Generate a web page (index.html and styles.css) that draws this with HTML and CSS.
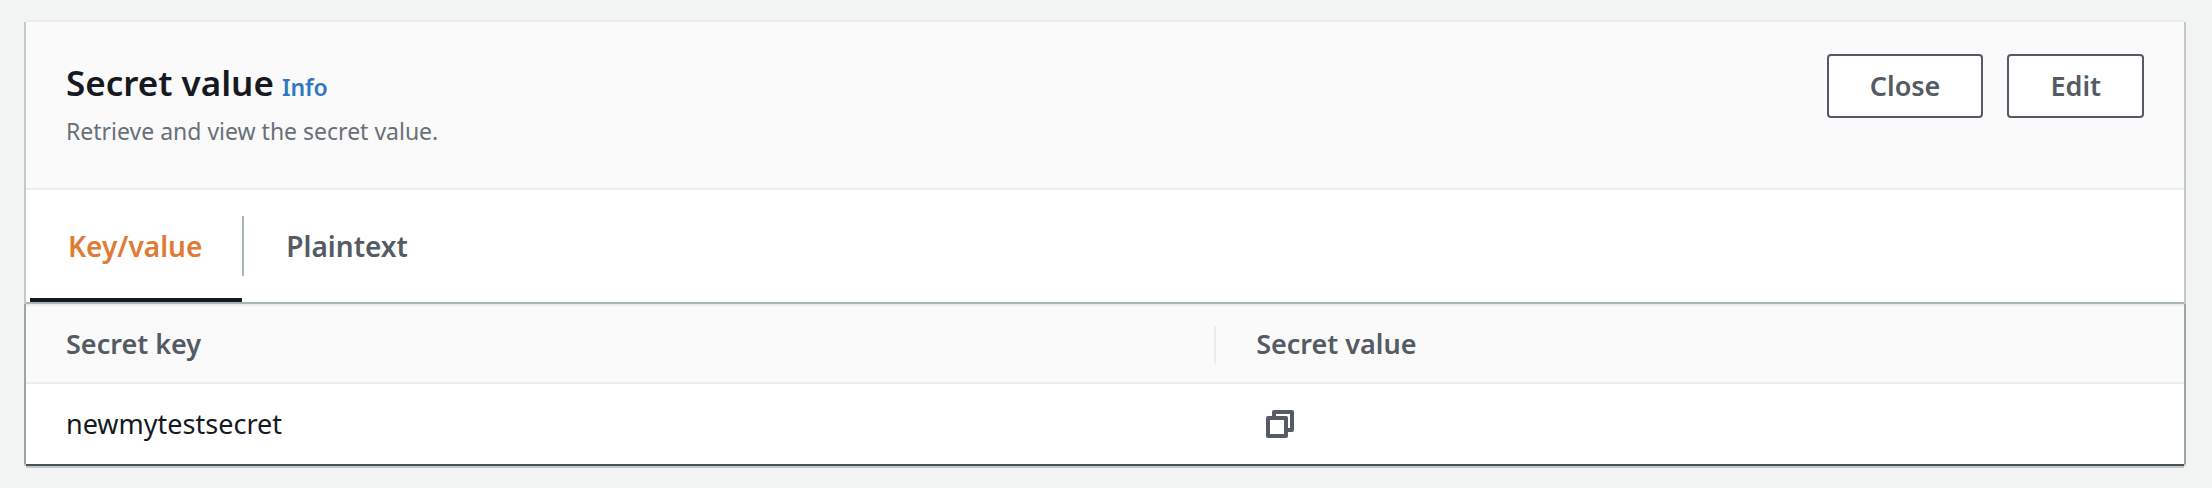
FILE: index.html
```html
<!DOCTYPE html>
<html lang="en">
<head>
<meta charset="utf-8">
<meta name="viewport" content="width=device-width, initial-scale=1">
<title>Secret value</title>
<link rel="stylesheet" href="styles.css">
</head>
<body>
<main class="page">
  <section class="panel" aria-labelledby="panel-title">
    <header class="panel-header">
      <div class="panel-heading">
        <div class="title-row">
          <h2 class="title" id="panel-title">Secret value</h2>
          <a class="info" href="#info">Info</a>
        </div>
        <p class="description">Retrieve and view the secret value.</p>
      </div>
      <div class="actions">
        <button class="button" type="button">Close</button>
        <button class="button" type="button">Edit</button>
      </div>
    </header>
    <div class="tabs" role="tablist">
      <button class="tab tab-active" type="button" role="tab" id="tab-kv" aria-selected="true" aria-controls="kv">Key/value</button>
      <span class="tab-divider"></span>
      <button class="tab" type="button" role="tab" aria-selected="false">Plaintext</button>
    </div>
    <div class="table-wrap" role="tabpanel" id="kv" aria-labelledby="tab-kv">
      <table class="table">
        <thead>
          <tr>
            <th class="col-key" scope="col"><div class="head-label head-divided">Secret key</div></th>
            <th scope="col"><div class="head-label">Secret value</div></th>
          </tr>
        </thead>
        <tbody>
          <tr>
            <td>newmytestsecret</td>
            <td>
              <button class="copy" type="button" aria-label="Copy secret value">
                <svg class="copy-icon" viewBox="0 0 28 28" aria-hidden="true">
                  <path d="M8 6V2h18v18h-4" />
                  <path d="M2 8h18v18H2z" />
                </svg>
              </button>
            </td>
          </tr>
        </tbody>
      </table>
    </div>
  </section>
</main>
</body>
</html>
```
FILE: styles.css
```css
* {
  box-sizing: border-box;
}

body {
  margin: 0;
  background: #f2f3f3;
  color: #16191f;
  font-family: "Noto Sans", "Open Sans", sans-serif;
  font-size: 27px;
  line-height: 40px;
}

button {
  font: inherit;
  cursor: pointer;
}

.page {
  padding: 20px 28px 20px 26px;
}

.panel {
  background: #fff;
  border-top: 2px solid #eaeded;
  box-shadow: -2px 2px 0 #c4c8c8, 2px 2px 0 #c4c8c8;
}

.panel-header {
  display: flex;
  justify-content: space-between;
  align-items: flex-start;
  padding: 32px 40px 38px;
  background: #fafafa;
  border-bottom: 2px solid #eaeded;
}

.title-row {
  display: flex;
  align-items: baseline;
  gap: 8px;
}

.title {
  margin: 0;
  font-size: 35px;
  font-weight: 600;
  line-height: 58px;
}

.info {
  color: #2f78c0;
  font-size: 23px;
  font-weight: 600;
  text-decoration: none;
}

.description {
  margin: 0;
  color: #687078;
  font-size: 23px;
  line-height: 38px;
}

.actions {
  display: flex;
  gap: 24px;
}

.button {
  height: 64px;
  padding: 0 41px;
  border: 2px solid #545b64;
  border-radius: 4px;
  background: #fff;
  color: #545b64;
  font-weight: 600;
}

.tabs {
  display: flex;
  align-items: center;
  height: 114px;
  padding-left: 4px;
  border-bottom: 2px solid #aab7b8;
}

.tab {
  align-self: stretch;
  padding: 4px 40px 0 38px;
  border: 0;
  border-bottom: 4px solid transparent;
  background: none;
  color: #545b64;
  font-size: 28px;
  font-weight: 600;
}

.tab-active {
  border-bottom-color: #16191f;
  color: #e07b36;
}

.tab-divider {
  width: 2px;
  height: 60px;
  margin-right: 4px;
  background: #aab7b8;
}

.table-wrap {
  border-top: 2px solid #eaeded;
  box-shadow: -2px 0 0 #9da4a6, 2px 0 0 #9da4a6, 0 2px 0 #44545a, 0 4px 0 #c4c8c8;
}

.table {
  width: 100%;
  border-collapse: separate;
  border-spacing: 0;
  table-layout: fixed;
}

.table th {
  padding: 20px 0 18px;
  background: #fafafa;
  border-bottom: 2px solid #eaeded;
  color: #545b64;
  font-weight: 600;
  text-align: left;
}

.col-key {
  width: 55.15%;
}

.head-label {
  padding: 0 40px 2px;
  line-height: 36px;
}

.head-divided {
  border-right: 2px solid #eaeded;
}

.table td {
  height: 80px;
  padding: 0 40px;
}

.copy {
  display: block;
  padding: 10px;
  border: 0;
  background: none;
}

.copy-icon {
  display: block;
  width: 28px;
  height: 28px;
  fill: none;
  stroke: #545b64;
  stroke-width: 4;
  stroke-linejoin: round;
}
```
